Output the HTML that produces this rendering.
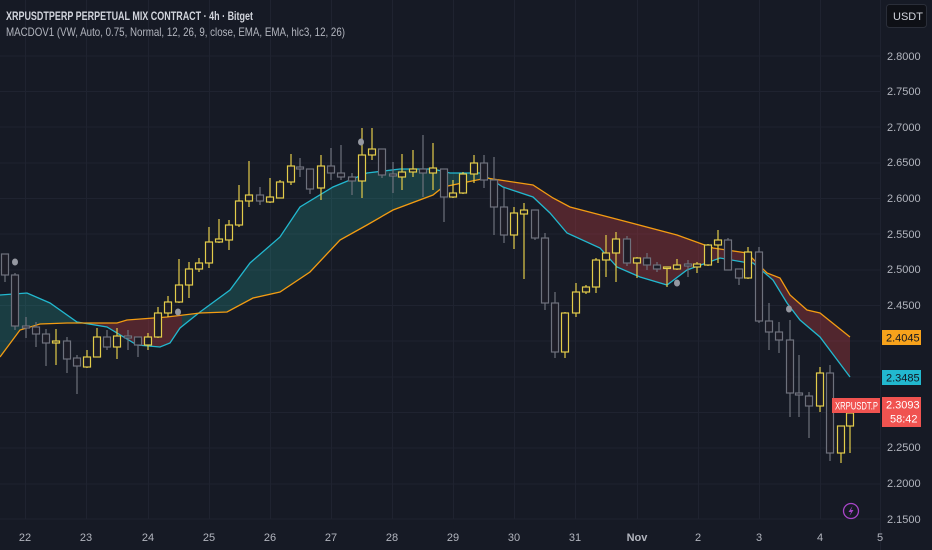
<!DOCTYPE html>
<html><head><meta charset="utf-8"><style>
html,body{margin:0;padding:0;background:#161a25;width:932px;height:550px;overflow:hidden}
svg{display:block}
text{font-family:"Liberation Sans",sans-serif}
</style></head><body>
<svg width="932" height="550" viewBox="0 0 932 550" xmlns="http://www.w3.org/2000/svg">
<rect width="932" height="550" fill="#161a25"/>
<g stroke="#1f2330" stroke-width="1">
<line x1="0" y1="56" x2="880" y2="56"/><line x1="0" y1="91.5" x2="880" y2="91.5"/><line x1="0" y1="127" x2="880" y2="127"/><line x1="0" y1="163" x2="880" y2="163"/><line x1="0" y1="198.5" x2="880" y2="198.5"/><line x1="0" y1="234" x2="880" y2="234"/><line x1="0" y1="270" x2="880" y2="270"/><line x1="0" y1="305.5" x2="880" y2="305.5"/><line x1="0" y1="341" x2="880" y2="341"/><line x1="0" y1="377" x2="880" y2="377"/><line x1="0" y1="412.5" x2="880" y2="412.5"/><line x1="0" y1="448" x2="880" y2="448"/><line x1="0" y1="484" x2="880" y2="484"/><line x1="0" y1="519" x2="880" y2="519"/>
<line x1="25.5" y1="0" x2="25.5" y2="519"/><line x1="86.5" y1="0" x2="86.5" y2="519"/><line x1="148.5" y1="0" x2="148.5" y2="519"/><line x1="209.5" y1="0" x2="209.5" y2="519"/><line x1="270.5" y1="0" x2="270.5" y2="519"/><line x1="331.5" y1="0" x2="331.5" y2="519"/><line x1="392.5" y1="0" x2="392.5" y2="519"/><line x1="453.5" y1="0" x2="453.5" y2="519"/><line x1="514.5" y1="0" x2="514.5" y2="519"/><line x1="575.5" y1="0" x2="575.5" y2="519"/><line x1="637.5" y1="0" x2="637.5" y2="519"/><line x1="698.5" y1="0" x2="698.5" y2="519"/><line x1="759.5" y1="0" x2="759.5" y2="519"/><line x1="820.5" y1="0" x2="820.5" y2="519"/>
</g>
<defs>
<polygon id="band" points="0,295 27,293 50,303 77,322 107,327 137,345 160,347 170,343 180,328 200,312 230,290 250,263 280,237 300,207 333,187 367,173 400,169 433,169 450,173 483,173 487,177 503,187 533,197 550,213 567,233 600,248 617,267 640,277 667,285 687,270 720,258 743,262 753,263 773,280 787,303 800,320 820,337 850,377 850,337 820,313 807,310 790,295 780,278 767,273 747,253 713,248 677,235 620,220 570,207 553,198 533,185 493,179 487,178 467,182 443,187 433,195 393,210 367,225 340,240 310,272 280,292 253,298 227,312 200,313 167,317 127,320 117,323 67,323 40,324 20,330 0,357"/>
<clipPath id="ct"><rect x="0" y="0" width="80" height="550"/><rect x="182" y="0" width="303" height="550"/></clipPath>
<clipPath id="cr"><rect x="80" y="0" width="102" height="550"/><rect x="485" y="0" width="366" height="550"/></clipPath>
</defs>
<use href="#band" fill="#26a69a" fill-opacity="0.25" clip-path="url(#ct)"/>
<use href="#band" fill="#b23a3f" fill-opacity="0.38" clip-path="url(#cr)"/>
<polyline fill="none" stroke="#22b8cf" stroke-width="1.3" points="0,295 27,293 50,303 77,322 107,327 137,345 160,347 170,343 180,328 200,312 230,290 250,263 280,237 300,207 333,187 367,173 400,169 433,169 450,173 483,173 487,177 503,187 533,197 550,213 567,233 600,248 617,267 640,277 667,285 687,270 720,258 743,262 753,263 773,280 787,303 800,320 820,337 850,377"/>
<polyline fill="none" stroke="#f39c12" stroke-width="1.3" points="0,357 20,330 40,324 67,323 117,323 127,320 167,317 200,313 227,312 253,298 280,292 310,272 340,240 367,225 393,210 433,195 443,187 467,182 487,178 493,179 533,185 553,198 570,207 620,220 677,235 713,248 747,253 767,273 780,278 790,295 807,310 820,313 850,337"/>
<g stroke-width="1.2" fill="#1c1c26">
<g stroke="#6e717c">
<line x1="5" y1="254" x2="5" y2="282"/><rect x="1.5" y="254" width="7" height="21"/>
<line x1="15" y1="273" x2="15" y2="330"/><rect x="11.5" y="275" width="7" height="51"/>
<line x1="26" y1="317" x2="26" y2="338"/><rect x="22.5" y="326" width="7" height="2"/>
<line x1="36" y1="322" x2="36" y2="347"/><rect x="32.5" y="327" width="7" height="7"/>
<line x1="46" y1="329" x2="46" y2="366"/><rect x="42.5" y="334" width="7" height="9"/>
<line x1="67" y1="337" x2="67" y2="373"/><rect x="63.5" y="341" width="7" height="18"/>
<line x1="77" y1="355" x2="77" y2="394"/><rect x="73.5" y="358" width="7" height="8"/>
<line x1="107" y1="330" x2="107" y2="350"/><rect x="103.5" y="337" width="7" height="10"/>
<line x1="128" y1="330" x2="128" y2="350"/><rect x="124.5" y="336" width="7" height="2"/>
<line x1="138" y1="337" x2="138" y2="357"/><rect x="134.5" y="337" width="7" height="8"/>
<line x1="260" y1="187" x2="260" y2="205"/><rect x="256.5" y="195" width="7" height="6"/>
<line x1="300" y1="158" x2="300" y2="177"/><rect x="296.5" y="167" width="7" height="2"/>
<line x1="310" y1="169" x2="310" y2="194"/><rect x="306.5" y="169" width="7" height="20"/>
<line x1="331" y1="148" x2="331" y2="180"/><rect x="327.5" y="166" width="7" height="7"/>
<line x1="341" y1="145" x2="341" y2="180"/><rect x="337.5" y="173" width="7" height="4"/>
<line x1="352" y1="173" x2="352" y2="195"/><rect x="348.5" y="177" width="7" height="4"/>
<line x1="382" y1="149" x2="382" y2="178"/><rect x="378.5" y="149" width="7" height="26"/>
<line x1="393" y1="162" x2="393" y2="193"/><rect x="389.5" y="174" width="7" height="2"/>
<line x1="423" y1="135" x2="423" y2="197"/><rect x="419.5" y="169" width="7" height="4"/>
<line x1="444" y1="169" x2="444" y2="222"/><rect x="440.5" y="169" width="7" height="28"/>
<line x1="484" y1="155" x2="484" y2="188"/><rect x="480.5" y="163" width="7" height="17"/>
<line x1="494" y1="157" x2="494" y2="235"/><rect x="490.5" y="180" width="7" height="27"/>
<line x1="504" y1="188" x2="504" y2="243"/><rect x="500.5" y="207" width="7" height="28"/>
<line x1="535" y1="210" x2="535" y2="240"/><rect x="531.5" y="210" width="7" height="28"/>
<line x1="545" y1="233" x2="545" y2="310"/><rect x="541.5" y="238" width="7" height="65"/>
<line x1="555" y1="292" x2="555" y2="358"/><rect x="551.5" y="303" width="7" height="49"/>
<line x1="627" y1="236" x2="627" y2="266"/><rect x="623.5" y="239" width="7" height="24"/>
<line x1="647" y1="253" x2="647" y2="270"/><rect x="643.5" y="258" width="7" height="7"/>
<line x1="657" y1="262" x2="657" y2="272"/><rect x="653.5" y="265" width="7" height="4"/>
<line x1="688" y1="260" x2="688" y2="277"/><rect x="684.5" y="264" width="7" height="2"/>
<line x1="728" y1="238" x2="728" y2="270"/><rect x="724.5" y="240" width="7" height="30"/>
<line x1="739" y1="269" x2="739" y2="285"/><rect x="735.5" y="269" width="7" height="9"/>
<line x1="759" y1="247" x2="759" y2="323"/><rect x="755.5" y="252" width="7" height="69"/>
<line x1="769" y1="303" x2="769" y2="350"/><rect x="765.5" y="321" width="7" height="11"/>
<line x1="779" y1="322" x2="779" y2="353"/><rect x="775.5" y="332" width="7" height="8"/>
<line x1="790" y1="320" x2="790" y2="417"/><rect x="786.5" y="340" width="7" height="53"/>
<line x1="799" y1="355" x2="799" y2="417"/><rect x="795.5" y="393" width="7" height="2"/>
<line x1="809" y1="392" x2="809" y2="438"/><rect x="805.5" y="396" width="7" height="10"/>
<line x1="830" y1="365" x2="830" y2="461"/><rect x="826.5" y="373" width="7" height="80"/>
</g>
<g stroke="#e3cc4a">
<line x1="56" y1="329" x2="56" y2="365"/><rect x="52.5" y="341" width="7" height="2"/>
<line x1="87" y1="350" x2="87" y2="368"/><rect x="83.5" y="357" width="7" height="10"/>
<line x1="97" y1="328" x2="97" y2="357"/><rect x="93.5" y="337" width="7" height="20"/>
<line x1="117" y1="328" x2="117" y2="359"/><rect x="113.5" y="336" width="7" height="11"/>
<line x1="148" y1="333" x2="148" y2="350"/><rect x="144.5" y="337" width="7" height="8"/>
<line x1="158" y1="307" x2="158" y2="338"/><rect x="154.5" y="313" width="7" height="24"/>
<line x1="168" y1="296" x2="168" y2="317"/><rect x="164.5" y="302" width="7" height="11"/>
<line x1="179" y1="259" x2="179" y2="303"/><rect x="175.5" y="285" width="7" height="17"/>
<line x1="189" y1="262" x2="189" y2="298"/><rect x="185.5" y="269" width="7" height="16"/>
<line x1="199" y1="258" x2="199" y2="272"/><rect x="195.5" y="263" width="7" height="6"/>
<line x1="209" y1="227" x2="209" y2="268"/><rect x="205.5" y="242" width="7" height="21"/>
<line x1="219" y1="219" x2="219" y2="243"/><rect x="215.5" y="239" width="7" height="3"/>
<line x1="229" y1="220" x2="229" y2="250"/><rect x="225.5" y="225" width="7" height="15"/>
<line x1="239" y1="185" x2="239" y2="227"/><rect x="235.5" y="201" width="7" height="24"/>
<line x1="249" y1="161" x2="249" y2="207"/><rect x="245.5" y="195" width="7" height="6"/>
<line x1="270" y1="178" x2="270" y2="203"/><rect x="266.5" y="197" width="7" height="5"/>
<line x1="280" y1="180" x2="280" y2="198"/><rect x="276.5" y="182" width="7" height="16"/>
<line x1="291" y1="154" x2="291" y2="185"/><rect x="287.5" y="166" width="7" height="16"/>
<line x1="321" y1="155" x2="321" y2="200"/><rect x="317.5" y="166" width="7" height="22"/>
<line x1="362" y1="128" x2="362" y2="198"/><rect x="358.5" y="155" width="7" height="26"/>
<line x1="372" y1="128" x2="372" y2="160"/><rect x="368.5" y="149" width="7" height="6"/>
<line x1="402" y1="154" x2="402" y2="190"/><rect x="398.5" y="172" width="7" height="5"/>
<line x1="413" y1="150" x2="413" y2="177"/><rect x="409.5" y="169" width="7" height="3"/>
<line x1="433" y1="143" x2="433" y2="190"/><rect x="429.5" y="168" width="7" height="5"/>
<line x1="453" y1="180" x2="453" y2="198"/><rect x="449.5" y="193" width="7" height="4"/>
<line x1="463" y1="172" x2="463" y2="194"/><rect x="459.5" y="174" width="7" height="19"/>
<line x1="474" y1="155" x2="474" y2="183"/><rect x="470.5" y="163" width="7" height="11"/>
<line x1="514" y1="207" x2="514" y2="249"/><rect x="510.5" y="213" width="7" height="22"/>
<line x1="524" y1="203" x2="524" y2="279"/><rect x="520.5" y="210" width="7" height="4"/>
<line x1="565" y1="312" x2="565" y2="358"/><rect x="561.5" y="313" width="7" height="39"/>
<line x1="576" y1="283" x2="576" y2="317"/><rect x="572.5" y="292" width="7" height="21"/>
<line x1="586" y1="285" x2="586" y2="294"/><rect x="582.5" y="287" width="7" height="5"/>
<line x1="596" y1="258" x2="596" y2="293"/><rect x="592.5" y="260" width="7" height="27"/>
<line x1="606" y1="235" x2="606" y2="277"/><rect x="602.5" y="253" width="7" height="7"/>
<line x1="616" y1="232" x2="616" y2="282"/><rect x="612.5" y="239" width="7" height="14"/>
<line x1="637" y1="257" x2="637" y2="278"/><rect x="633.5" y="258" width="7" height="5"/>
<line x1="667" y1="267" x2="667" y2="287"/><rect x="663.5" y="267" width="7" height="1.5"/>
<line x1="677" y1="259" x2="677" y2="270"/><rect x="673.5" y="265" width="7" height="4"/>
<line x1="697" y1="262" x2="697" y2="273"/><rect x="693.5" y="264" width="7" height="3"/>
<line x1="708" y1="244" x2="708" y2="266"/><rect x="704.5" y="245" width="7" height="20"/>
<line x1="718" y1="230" x2="718" y2="263"/><rect x="714.5" y="240" width="7" height="5"/>
<line x1="748" y1="247" x2="748" y2="279"/><rect x="744.5" y="252" width="7" height="26"/>
<line x1="820" y1="367" x2="820" y2="412"/><rect x="816.5" y="373" width="7" height="33"/>
<line x1="841" y1="426" x2="841" y2="463"/><rect x="837.5" y="426" width="7" height="27"/>
<line x1="850" y1="410" x2="850" y2="453"/><rect x="846.5" y="413" width="7" height="13"/>
</g>
</g>
<g fill="#9598a1">
<ellipse cx="15" cy="262" rx="3" ry="3.5"/><ellipse cx="178" cy="312" rx="3" ry="3.5"/><ellipse cx="361" cy="142" rx="3" ry="3.5"/><ellipse cx="677" cy="283" rx="3" ry="3.5"/><ellipse cx="789" cy="309" rx="3" ry="3.5"/>
</g>
<line x1="880.5" y1="0" x2="880.5" y2="550" stroke="#1f2330"/>
<g fill="#b2b5be" font-size="11">
<text x="887" y="60">2.8000</text><text x="887" y="95">2.7500</text><text x="887" y="131">2.7000</text><text x="887" y="166">2.6500</text><text x="887" y="202">2.6000</text><text x="887" y="238">2.5500</text><text x="887" y="273">2.5000</text><text x="887" y="309">2.4500</text><text x="887" y="451">2.2500</text><text x="887" y="487">2.2000</text><text x="887" y="523">2.1500</text>
</g>
<g fill="#b2b5be" font-size="11" text-anchor="middle">
<text x="25" y="541">22</text><text x="86" y="541">23</text><text x="148" y="541">24</text><text x="209" y="541">25</text><text x="270" y="541">26</text><text x="331" y="541">27</text><text x="392" y="541">28</text><text x="453" y="541">29</text><text x="514" y="541">30</text><text x="575" y="541">31</text><text x="637" y="541" font-weight="bold">Nov</text><text x="698" y="541">2</text><text x="759" y="541">3</text><text x="820" y="541">4</text><text x="880" y="541">5</text>
</g>
<rect x="882" y="330" width="39" height="15" fill="#f7a21b"/>
<text x="886" y="341.5" font-size="11" fill="#131722">2.4045</text>
<rect x="882" y="370" width="39" height="15" fill="#22b8cf"/>
<text x="886" y="381.5" font-size="11" fill="#131722">2.3485</text>
<rect x="882" y="397" width="39" height="30" fill="#f05350"/>
<text x="886" y="408.5" font-size="11" fill="#fff">2.3093</text>
<text x="890" y="422.5" font-size="11" fill="#fff">58:42</text>
<rect x="832" y="398" width="48" height="15" fill="#f05350"/>
<text x="835" y="409.5" font-size="11" fill="#fff" textLength="43" lengthAdjust="spacingAndGlyphs">XRPUSDT.P</text>
<circle cx="851" cy="511" r="7.5" fill="none" stroke="#a845c8" stroke-width="1.3"/>
<path d="M852.5 506 L848.5 512 L851 512 L849.5 516 L853.5 510 L851 510 Z" fill="#a845c8"/>
<rect x="886.5" y="4.5" width="40" height="23" rx="3" fill="#0e1016" stroke="#2a2e39"/>
<text x="893" y="20" font-size="11" fill="#d1d4dc">USDT</text>
<text x="6" y="20" font-size="12" font-weight="bold" fill="#d1d4dc" textLength="247" lengthAdjust="spacingAndGlyphs">XRPUSDTPERP PERPETUAL MIX CONTRACT · 4h · Bitget</text>
<text x="6" y="36" font-size="12" fill="#b2b5be" textLength="339" lengthAdjust="spacingAndGlyphs">MACDOV1 (VW, Auto, 0.75, Normal, 12, 26, 9, close, EMA, EMA, hlc3, 12, 26)</text>
</svg>
</body></html>
